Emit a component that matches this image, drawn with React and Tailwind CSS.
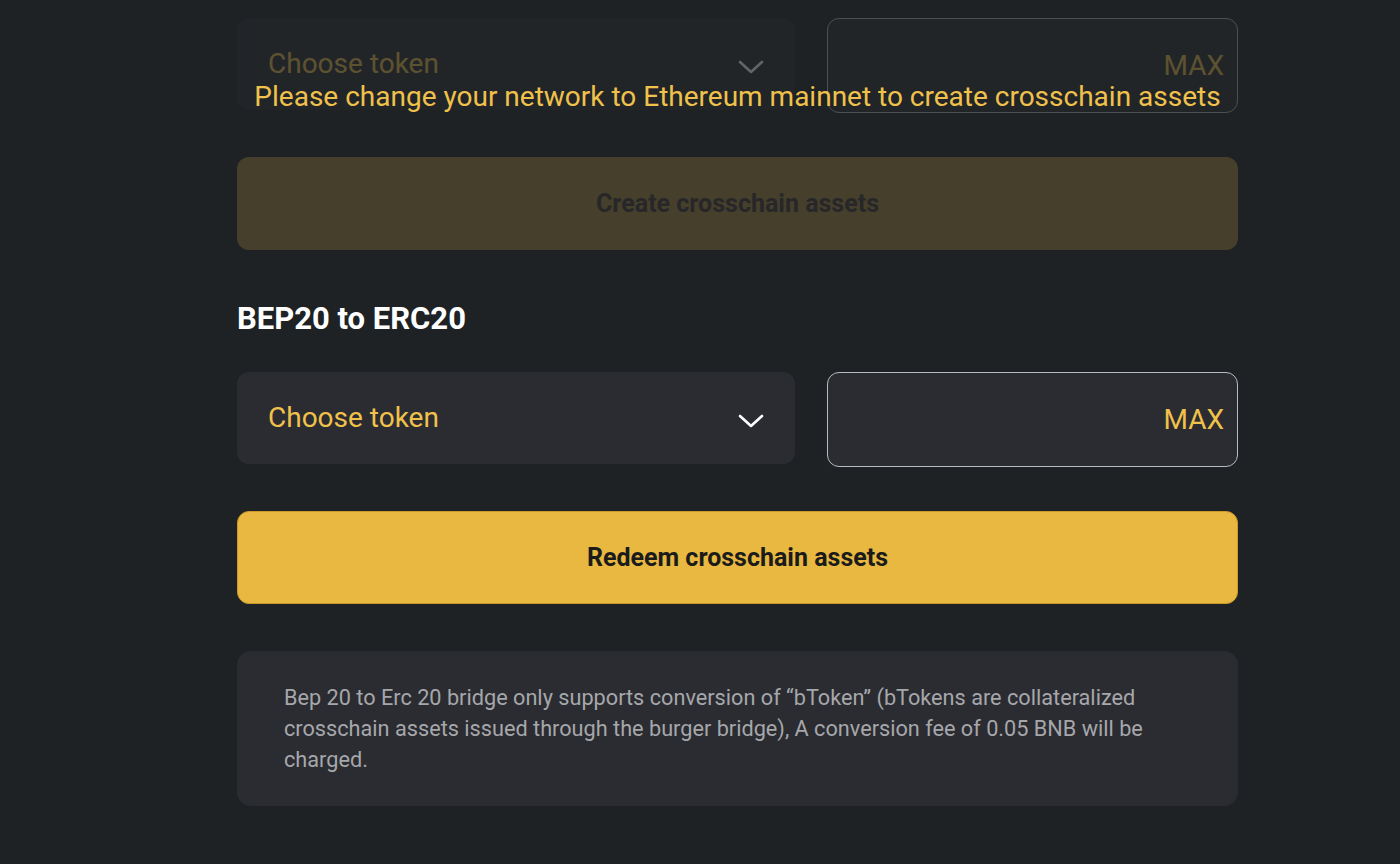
// Flecha del desplegable
const Chevron = () => (
  <svg width="26" height="14" viewBox="0 0 26 14" fill="none" className="mt-[6px] text-white">
    <path d="M2 2 L13 12 L24 2" stroke="currentColor" strokeWidth="2.6" strokeLinecap="round" strokeLinejoin="round" />
  </svg>
);

// Fila de selector de token + importe con botón MAX
const TokenRow = ({ dim }) => (
  <div className={`flex items-start gap-8 ${dim ? "opacity-30" : ""}`}>
    <div className="flex h-[92px] w-[558px] items-center justify-between rounded-xl bg-[#2b2c31] pl-[31px] pr-[31px]">
      <span className="text-[28px] text-[#f0c14b]">Choose token</span>
      <Chevron />
    </div>
    <div className="flex h-[95px] flex-1 items-center justify-end rounded-xl border border-[#b9bbbf] bg-[#2b2c31] pr-[13px]">
      <span className="text-[28px] text-[#f0c14b]">MAX</span>
    </div>
  </div>
);

export default function App() {
  return (
    <div
      className="min-h-[864px] w-full bg-[#1e2225]"
      style={{ fontFamily: "Roboto, 'Noto Sans', sans-serif" }}
    >
      <div className="ml-[237px] w-[1001px] pt-[18px]">
        <div className="relative">
          <TokenRow dim />
          <p className="absolute inset-x-0 top-[62px] whitespace-nowrap text-center text-[28px] leading-[34px] text-[#f0c14b]">
            Please change your network to Ethereum mainnet to create crosschain assets
          </p>
        </div>

        <button className="mt-[44px] flex h-[93px] w-full items-center justify-center rounded-xl bg-[#463f2b] text-[25px] font-bold text-[#27272a]">
          Create crosschain assets
        </button>

        <h2 className="mt-[51px] text-[31px] font-bold leading-[36px] text-white">BEP20 to ERC20</h2>

        <div className="mt-[35px]">
          <TokenRow />
        </div>

        <button className="mt-[44px] flex h-[93px] w-full items-center justify-center rounded-xl border border-[#c99a2a] bg-[#e8b840] text-[25px] font-bold text-[#1b1b1b]">
          Redeem crosschain assets
        </button>

        <div className="mt-[47px] rounded-[14px] bg-[#2b2c31] pb-[31px] pl-[47px] pr-[60px] pt-[31px]">
          <p className="text-[21.7px] leading-[31px] text-[#a6a7ab]">
            Bep 20 to Erc 20 bridge only supports conversion of “bToken” (bTokens are collateralized crosschain assets issued through the burger bridge), A conversion fee of 0.05 BNB will be charged.
          </p>
        </div>
      </div>
    </div>
  );
}
